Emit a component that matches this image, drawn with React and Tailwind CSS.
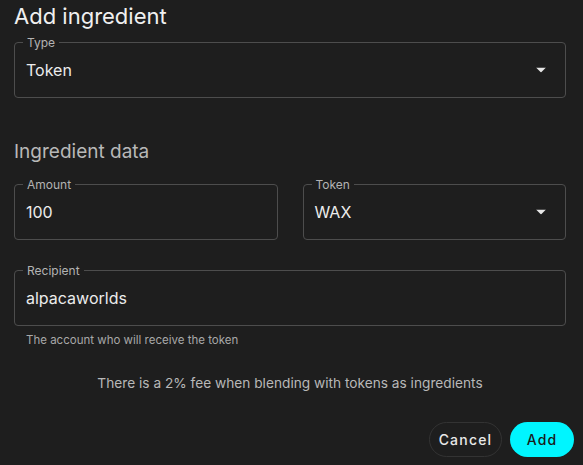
import React from 'react';

const Arrow = () => (
  <svg width="10" height="5" viewBox="0 0 10 5" className="absolute right-[19px] top-1/2 -translate-y-1/2">
    <path d="M0 0 L10 0 L5 5 Z" fill="#e6e6e6" />
  </svg>
);

const Field = ({ label, value, select, className = '' }) => (
  <div className={`relative h-[56px] rounded-[4px] border border-[#4d4d4d] ${className}`}>
    <span className="absolute -top-[8px] left-[8px] bg-[#1e1e1e] px-[4px] text-[12px] leading-[16px] text-[#b3b3b3]">
      {label}
    </span>
    <div className="flex h-full items-center pl-[11px] text-[16px] text-[#ececec]">{value}</div>
    {select && <Arrow />}
  </div>
);

export default function App() {
  return (
    <div
      className="h-[465px] w-[583px] overflow-hidden bg-[#1e1e1e] pl-[14px] pr-[17px]"
      style={{ fontFamily: 'Inter, "Noto Sans", sans-serif' }}
    >
      <h2 className="h-[32px] text-[22px] leading-[32px] text-[#f0f0f0]">Add ingredient</h2>

      <Field label="Type" value="Token" select className="mt-[10px]" />

      <h3 className="mt-[40px] text-[19px] leading-[28px] text-[#b8b8b8]">Ingredient data</h3>

      <div className="mt-[18px] grid grid-cols-2 gap-[25px]">
        <Field label="Amount" value="100" />
        <Field label="Token" value="WAX" select />
      </div>

      <Field label="Recipient" value="alpacaworlds" className="mt-[30px]" />
      <p className="mt-[6px] pl-[12px] text-[11.5px] leading-[16px] text-[#a8a8a8]">
        The account who will receive the token
      </p>

      <p className="mt-[25px] text-center text-[13.7px] leading-[20px] text-[#b8b8b8]">
        There is a 2% fee when blending with tokens as ingredients
      </p>

      <div className="-mr-[8px] mt-[29px] flex justify-end gap-[8px]">
        <button className="h-[35px] w-[73px] rounded-full border border-[#333] text-[14px] font-medium tracking-[1.2px] text-[#e8e8e8]">
          Cancel
        </button>
        <button className="h-[35px] w-[64px] rounded-full bg-[#00f5ff] text-[14px] font-medium tracking-[1.2px] text-[#1a1a1a]">
          Add
        </button>
      </div>
    </div>
  );
}
